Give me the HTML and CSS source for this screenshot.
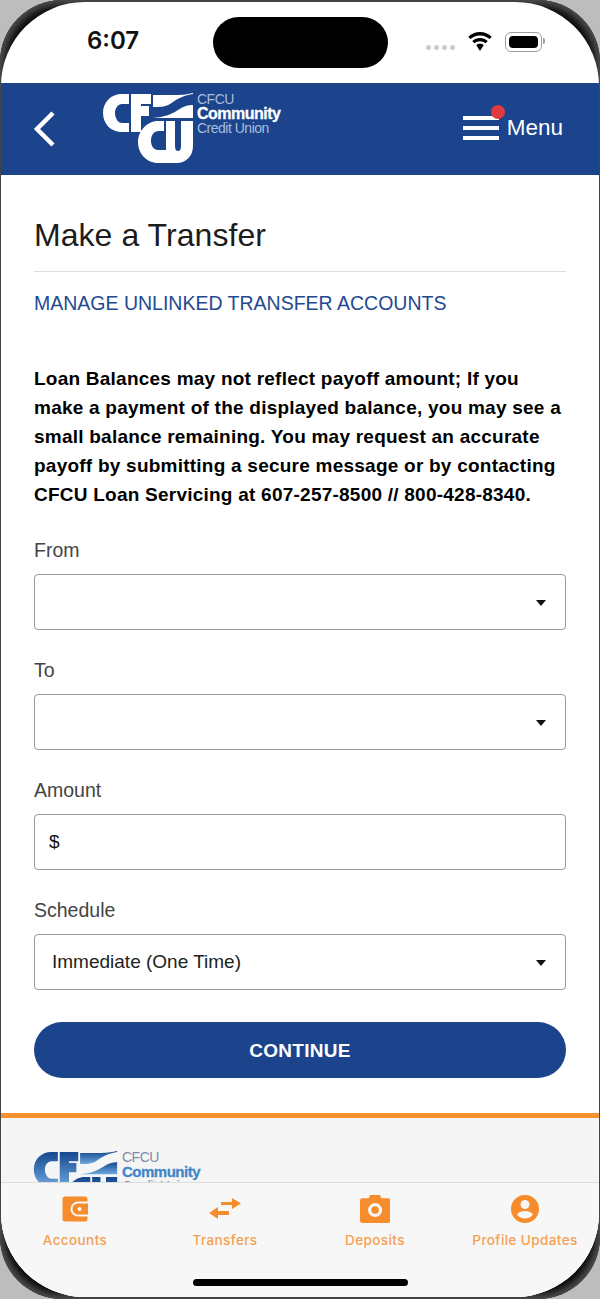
FILE: index.html
```html
<html lang="en">
  <head>
    <meta charset="UTF-8" />
    <title>Make a Transfer</title>
    <meta name="viewport" content="width=device-width,initial-scale=1" />
    <link rel="stylesheet" href="styles.css">
  </head>
  <body>
    <svg class="defs" width="0" height="0">
      <defs>
        <linearGradient id="logo-blue" x1="0" y1="0" x2="0" y2="1">
          <stop offset="0" stop-color="#15478f" />
          <stop offset="1" stop-color="#6fa8dc" />
        </linearGradient>
        <symbol id="cfcu-mark" viewBox="100 90 95 75">
          <path d="M129 94H122C111 94 103 102 103 113C103 124 111 132 122 132H129V123H122C118 123 115 118 115 113C115 108 118 104 122 104H129Z" />
          <path d="M131 94H151V104H141V106H149V116H141V132H131Z" />
          <path d="M153 95H176C184 95 188 94 193 93V94C181 96 176 100 170 104C165 107 160 107 153 107Z" />
          <path d="M153 118C165 117 172 114 178 110C184 106 188 105 193 105V118Z" />
          <path d="M164 121H158C147 121 138 131 138 142C138 154 147 163 158 163H177C186 163 193 156 193 146V121H181V146C181 149 180 151 178 151C176 151 175 149 175 146V121H166V150H158C154 150 151 146 151 141C151 135 154 131 159 131H164Z" />
        </symbol>
      </defs>
    </svg>

    <div class="phone">
      <div class="screen">
        <div class="status-bar">
          <span class="time">6:07</span>
          <span class="island"></span>
          <span class="signal"><i></i><i></i><i></i><i></i></span>
          <svg class="wifi" viewBox="1.500 0 23 18">
            <path d="M13 3.2c3.5 0 6.7 1.3 9.1 3.5l2-2.2C21.100 1.700 17.200 0 13 0S4.900 1.700 1.900 4.500l2 2.200C6.300 4.500 9.500 3.200 13 3.200z" />
            <path d="M13 8.700c2 0 3.900.8 5.300 2l2-2.200C18.300 6.700 15.800 5.600 13 5.600s-5.300 1.100-7.300 2.900l2 2.200c1.400-1.200 3.300-2 5.300-2z" />
            <path d="M13 11.200c-1.400 0-2.600.5-3.500 1.300L13 18l3.500-5.500c-.9-.8-2.100-1.300-3.500-1.300z" />
          </svg>
          <span class="battery"><b></b></span>
        </div>

        <header class="top-bar">
          <svg class="back" viewBox="0 0 24 38"><path d="M21 3 5 19l16 16" /></svg>
          <div class="logo logo-light">
            <svg class="logo-mark"><use href="#cfcu-mark" /></svg>
            <div class="logo-text">
              <span>CFCU</span>
              <strong>Community</strong>
              <span>Credit Union</span>
            </div>
          </div>
          <div class="menu">
            <span class="burger"><i></i><i></i><i></i><em></em></span>
            <span class="menu-label">Menu</span>
          </div>
        </header>

        <main class="content">
          <h1>Make a Transfer</h1>
          <a class="manage-link" href="#">MANAGE UNLINKED TRANSFER ACCOUNTS</a>
          <p class="notice">Loan Balances may not reflect payoff amount; If you make a payment of the displayed balance, you may see a small balance remaining. You may request an accurate payoff by submitting a secure message or by contacting CFCU Loan Servicing at 607-257-8500 // 800-428-8340.</p>

          <form class="transfer-form">
            <label class="field">
              <span>From</span>
              <div class="select-wrap"><select><option></option></select></div>
            </label>
            <label class="field">
              <span>To</span>
              <div class="select-wrap"><select><option></option></select></div>
            </label>
            <label class="field">
              <span>Amount</span>
              <div class="amount-wrap">$<input type="text" /></div>
            </label>
            <label class="field">
              <span>Schedule</span>
              <div class="select-wrap"><select><option>Immediate (One Time)</option></select></div>
            </label>
            <button type="button" class="continue">CONTINUE</button>
          </form>
        </main>

        <footer class="site-footer">
          <div class="logo logo-small">
            <svg class="logo-mark"><use href="#cfcu-mark" /></svg>
            <div class="logo-text">
              <span>CFCU</span>
              <strong>Community</strong>
              <span>Credit Union</span>
            </div>
          </div>
        </footer>

        <nav class="tabs">
          <a class="tab" href="#">
            <svg viewBox="0 0 28 28">
              <path d="M4 1.500h20a2.500 2.500 0 0 1 2.500 2.500v2.500H17a7 7 0 0 0 0 15h9.500V24a2.500 2.500 0 0 1-2.500 2.500H4A2.500 2.500 0 0 1 1.500 24V4A2.500 2.500 0 0 1 4 1.500z" />
              <path fill-rule="evenodd" d="M17 8.500h10v11H17a5.500 5.500 0 0 1 0-11zm1.500 3.500a2 2 0 1 0 0 4 2 2 0 0 0 0-4z" />
            </svg>
            Accounts
          </a>
          <a class="tab" href="#">
            <svg viewBox="0 0 32 28">
              <path d="M12 7h11V3l9 5.500-9 5.500v-4H12z" />
              <path d="M20 16H9v-4l-9 6 9 6v-4h11z" />
            </svg>
            Transfers
          </a>
          <a class="tab" href="#">
            <svg viewBox="0 0 28 26">
              <path fill-rule="evenodd" d="M9.500 0h9l1.500 3h6a2 2 0 0 1 2 2v19a2 2 0 0 1-2 2H2a2 2 0 0 1-2-2V5a2 2 0 0 1 2-2h6zM14 7.500a6.500 6.500 0 1 0 0 13 6.500 6.500 0 0 0 0-13zm0 3a3.500 3.500 0 1 1 0 7 3.500 3.500 0 0 1 0-7z" />
            </svg>
            Deposits
          </a>
          <a class="tab" href="#">
            <svg viewBox="0 0 28 28">
              <path fill-rule="evenodd" d="M14 0a14 14 0 1 1 0 28 14 14 0 0 1 0-28zm0 5a4.500 4.500 0 1 0 0 9 4.500 4.500 0 0 0 0-9zm0 11c-3.600 0-6.800 1.200-8 3.500a10 10 0 0 0 16 0c-1.200-2.300-4.400-3.500-8-3.500z" />
            </svg>
            Profile Updates
          </a>
        </nav>
        <span class="home-bar"></span>
      </div>
    </div>
  </body>
</html>
```

FILE: styles.css
```css
* {
  box-sizing: border-box;
}
html,
body {
  margin: 0;
  height: 1299px;
  overflow: hidden;
  background: #bdbdbd;
}
body {
  font-family: "Liberation Sans", Arial, sans-serif;
  color: #111;
}
.defs {
  position: absolute;
}
.phone {
  height: 1299px;
  padding: 2px 1px;
  background: #0a0a0a;
  border-radius: 62px;
  box-shadow: inset 0 0 7px 5px #4d4d4d;
}
.screen {
  position: relative;
  display: flex;
  flex-direction: column;
  height: 100%;
  overflow: hidden;
  background: #fff;
  border-radius: 84px;
}

/* status bar */
.status-bar {
  position: relative;
  flex: none;
  height: 81px;
}
.time {
  position: absolute;
  left: 86px;
  top: 24px;
  font-family: Inter, sans-serif;
  font-size: 24px;
  font-weight: 600;
  line-height: 30px;
}
.island {
  position: absolute;
  left: 212px;
  top: 15px;
  width: 175px;
  height: 51px;
  background: #000;
  border-radius: 26px;
}
.signal {
  position: absolute;
  left: 425px;
  top: 43px;
  display: flex;
  gap: 3px;
}
.signal i {
  width: 5px;
  height: 5px;
  background: #ccc;
  border-radius: 50%;
}
.wifi {
  position: absolute;
  left: 466px;
  top: 30px;
  width: 26px;
  height: 19px;
}
.battery {
  position: absolute;
  left: 504px;
  top: 30px;
  width: 37px;
  height: 20px;
  padding: 3px;
  border: 1.500px solid #9d9d9d;
  border-radius: 6px;
}
.battery b {
  display: block;
  height: 100%;
  background: #000;
  border-radius: 4px;
}
.battery::after {
  content: "";
  position: absolute;
  right: -4px;
  top: 5px;
  width: 2px;
  height: 6px;
  background: #9d9d9d;
  border-radius: 0 2px 2px 0;
}

/* blue header */
.top-bar {
  display: flex;
  flex: none;
  align-items: center;
  height: 92px;
  padding-left: 31px;
  background: #1b448c;
  color: #fff;
}
.back {
  width: 24px;
  height: 38px;
  fill: none;
  stroke: #fff;
  stroke-width: 4.500;
}
.logo {
  display: flex;
}
.logo-mark {
  flex: none;
}
.logo-light {
  margin-left: 44px;
  margin-top: -4px;
  fill: #fff;
}
.logo-light .logo-mark {
  width: 95px;
  height: 75px;
}
.logo-text {
  display: flex;
  flex-direction: column;
  white-space: nowrap;
}
.logo-text span,
.logo-text strong {
  display: block;
  font-size: 14px;
  line-height: 14px;
}
.logo-text span {
  font-weight: 400;
  letter-spacing: -0.500px;
}
.logo-text strong {
  margin-top: 1px;
  font-size: 16px;
  letter-spacing: -0.500px;
}
.logo-light .logo-text {
  margin-left: 2px;
  padding-top: 2px;
  color: #a9bcdc;
}
.logo-light .logo-text strong {
  color: #fff;
  -webkit-text-stroke: 0.300px #fff;
}
.menu {
  display: flex;
  align-items: center;
  margin-left: auto;
  padding-right: 36px;
}
.burger {
  position: relative;
  display: flex;
  flex-direction: column;
  gap: 6px;
  width: 36px;
  margin-top: -2px;
}
.burger i {
  height: 4px;
  background: #fff;
}
.burger em {
  position: absolute;
  right: -6px;
  top: -11px;
  width: 14px;
  height: 14px;
  background: #e03a3e;
  border-radius: 50%;
}
.menu-label {
  margin-left: 8px;
  margin-top: -2px;
  font-size: 22.500px;
}

/* transfer form */
.content {
  flex: none;
  padding: 36px 33px 35px;
}
h1 {
  margin: 0;
  padding-bottom: 12px;
  border-bottom: 1px solid #ddd;
  color: #1c1c1c;
  font-size: 32px;
  font-weight: 400;
  line-height: 48px;
  letter-spacing: 0.050px;
}
.manage-link {
  display: block;
  margin-top: 19px;
  color: #1f4a90;
  font-size: 19.500px;
  line-height: 24px;
  text-decoration: none;
}
.notice {
  margin: 49px 0 29px;
  color: #000;
  font-size: 19px;
  font-weight: 700;
  line-height: 29px;
  letter-spacing: 0.235px;
}
.transfer-form {
  display: flex;
  flex-direction: column;
  margin: 0;
}
.field {
  display: block;
  margin-bottom: 28px;
}
.field > span {
  display: block;
  margin-bottom: 12px;
  color: #444;
  font-size: 19.500px;
  line-height: 24px;
}
.select-wrap,
.amount-wrap {
  position: relative;
  height: 56px;
  border: 1.500px solid #999;
  border-radius: 4px;
}
.select-wrap select {
  width: 100%;
  height: 100%;
  padding: 0 17px 2px;
  border: none;
  outline: none;
  appearance: none;
  background: transparent;
  color: #222;
  font-family: inherit;
  font-size: 19px;
}
.select-wrap::after {
  content: "";
  position: absolute;
  right: 19px;
  top: 25px;
  border-top: 6px solid #111;
  border-left: 5.500px solid transparent;
  border-right: 5.500px solid transparent;
}
.amount-wrap {
  display: flex;
  align-items: center;
  padding-left: 14px;
  font-size: 19px;
}
.amount-wrap input {
  flex: 1;
  border: none;
  outline: none;
  background: transparent;
}
.continue {
  height: 56px;
  margin-top: 4px;
  padding-top: 2px;
  border: none;
  border-radius: 28px;
  background: #1b448c;
  color: #fff;
  font-family: inherit;
  font-size: 19px;
  font-weight: 700;
  letter-spacing: 0.300px;
}

/* footer under the form */
.site-footer {
  flex: 1;
  padding: 34px 33px 0;
  border-top: 5px solid #f6922d;
  background: #f5f5f5;
}
.logo-small {
  fill: url(#logo-blue);
}
.logo-small .logo-mark {
  width: 88px;
  height: 70px;
  margin-top: -4px;
  margin-left: -3px;
}
.logo-small .logo-text {
  margin-top: -2px;
  margin-left: 3px;
  color: #7d8aa8;
}
.logo-small .logo-text strong {
  color: #3f86c8;
  font-size: 15px;
  -webkit-text-stroke: 0.300px #3f86c8;
}

/* tab bar sits over the footer */
.tabs {
  position: absolute;
  left: -1px;
  right: -1px;
  bottom: 0;
  display: grid;
  grid-template-columns: repeat(4, 150px);
  height: 115px;
  padding-top: 12px;
  border-top: 1px solid #dcdcdc;
  background: #f7f7f7;
}
.tab {
  display: flex;
  flex-direction: column;
  align-items: center;
  height: 56px;
  color: #f4a052;
  font-family: Inter, sans-serif;
  font-size: 13.500px;
  font-weight: 500;
  letter-spacing: 0.400px;
  line-height: 18px;
  text-decoration: none;
}
.tab svg {
  height: 28px;
  margin-bottom: 8px;
  fill: #f68c2c;
}
.home-bar {
  position: absolute;
  left: 192px;
  bottom: 11px;
  width: 215px;
  height: 7px;
  background: #000;
  border-radius: 4px;
}
```
